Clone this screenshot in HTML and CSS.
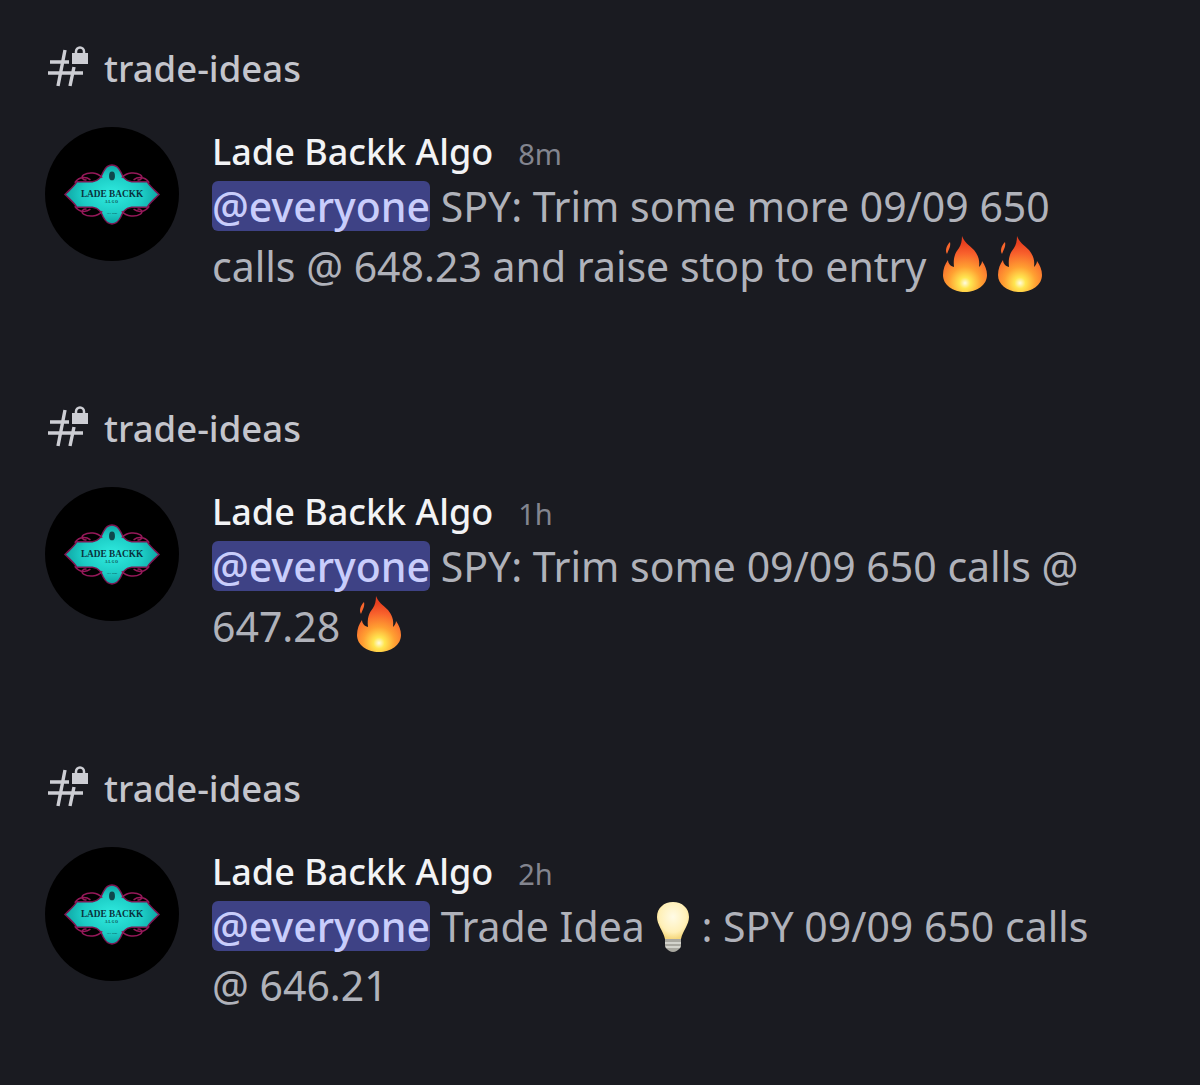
FILE: index.html
```html
<!DOCTYPE html>
<html>
  <head>
    <title>trade-ideas</title>
    <link rel="stylesheet" href="styles.css">
  </head>
  <body>
    <svg class="defs" width="0" height="0">
      <defs>
        <radialGradient id="fire" gradientUnits="userSpaceOnUse" cx="22" cy="47" r="40">
          <stop offset="0" stop-color="#fffbe0"/>
          <stop offset="0.14" stop-color="#ffe650"/>
          <stop offset="0.4" stop-color="#ffa032"/>
          <stop offset="0.75" stop-color="#f8602c"/>
          <stop offset="1" stop-color="#e8401f"/>
        </radialGradient>
        <radialGradient id="bulb" cx="0.5" cy="0.4" r="0.6">
          <stop offset="0" stop-color="#fffbe6"/>
          <stop offset="0.7" stop-color="#fff0b8"/>
          <stop offset="1" stop-color="#f5d77c"/>
        </radialGradient>
        <radialGradient id="teal" cx="0.5" cy="0.5" r="0.55">
          <stop offset="0" stop-color="#30ece0"/>
          <stop offset="0.6" stop-color="#1ccbc4"/>
          <stop offset="1" stop-color="#0a9a9a"/>
        </radialGradient>
        <symbol id="flame" viewBox="0 0 44 56">
          <path fill="url(#fire)" d="M19 0C21 6 26 9 31 14C35 19 37 24 36 31C38 29 39 27 39 25C42 29 44 34 44 39C44 49 34 56 22 56C10 56 0 49 0 39C0 33 2 28 5 24C5 27 7 30 11 31C10 22 12 17 16 12C18 9 19 5 19 0Z"/>
          <path fill="#f9662c" d="M7 6C8 10 6 13 4 18C2 15 3 10 7 6Z"/>
        </symbol>
        <symbol id="channel" viewBox="0 0 46 44">
          <path class="hash" d="M3 16H22M1 27H36M18 4L11 40M27 21L23 40"/>
          <path class="lock-body" d="M25 7H41V18H25Z"/>
          <path class="lock-shackle" d="M29 8V5.500A4 4 0 0 1 37 5.500V8"/>
        </symbol>
        <path id="scroll" class="logo-scroll" d="M60 15C65 9 74 9 79 12C82 14 80 18 76 17M72 17C76 14 83 13 88 20"/>
        <symbol id="logo" viewBox="0 0 100 64">
          <path class="logo-body" d="M50 2C54 2 57 5 59 9C61 14 63 18 70 19L86 19C88 23 93 27 98 32C93 37 88 41 86 45L70 45C63 46 61 50 59 55C57 59 54 62 50 62C46 62 43 59 41 55C39 50 37 46 30 45L14 45C12 41 7 37 2 32C7 27 12 23 14 19L30 19C37 18 39 14 41 9C43 5 46 2 50 2Z"/>
          <use href="#scroll"/>
          <use href="#scroll" transform="matrix(-1 0 0 1 100 0)"/>
          <use href="#scroll" transform="matrix(1 0 0 -1 0 64)"/>
          <use href="#scroll" transform="matrix(-1 0 0 -1 100 64)"/>
          <ellipse class="logo-crest" cx="50" cy="13" rx="3" ry="4.500"/>
          <text class="logo-title" x="50" y="35" text-anchor="middle">LADE BACKK</text>
          <text class="logo-sub" x="50" y="41" text-anchor="middle">ALGO</text>
          <text class="logo-est" x="50" y="52" text-anchor="middle">EST. 2020</text>
        </symbol>
      </defs>
    </svg>

    <!-- first notification -->
    <section class="notification">
      <div class="channel-row">
        <svg class="channel-icon"><use href="#channel"/></svg>
        <span class="channel-name">trade-ideas</span>
      </div>
      <div class="message">
        <div class="avatar"><svg class="logo"><use href="#logo"/></svg></div>
        <div class="message-body">
          <div class="author-row">
            <span class="author">Lade Backk Algo</span>
            <span class="time">8m</span>
          </div>
          <p class="text"><span class="mention">@everyone</span> SPY: Trim some more 09/09 650 calls @ 648.23 and raise stop to entry <svg class="emoji"><use href="#flame"/></svg> <svg class="emoji next"><use href="#flame"/></svg></p>
        </div>
      </div>
    </section>

    <!-- second notification -->
    <section class="notification">
      <div class="channel-row">
        <svg class="channel-icon"><use href="#channel"/></svg>
        <span class="channel-name">trade-ideas</span>
      </div>
      <div class="message">
        <div class="avatar"><svg class="logo"><use href="#logo"/></svg></div>
        <div class="message-body">
          <div class="author-row">
            <span class="author">Lade Backk Algo</span>
            <span class="time">1h</span>
          </div>
          <p class="text"><span class="mention">@everyone</span> SPY: Trim some 09/09 650 calls @ 647.28 <svg class="emoji"><use href="#flame"/></svg></p>
        </div>
      </div>
    </section>

    <!-- third notification -->
    <section class="notification">
      <div class="channel-row">
        <svg class="channel-icon"><use href="#channel"/></svg>
        <span class="channel-name">trade-ideas</span>
      </div>
      <div class="message">
        <div class="avatar"><svg class="logo"><use href="#logo"/></svg></div>
        <div class="message-body">
          <div class="author-row">
            <span class="author">Lade Backk Algo</span>
            <span class="time">2h</span>
          </div>
          <p class="text"><span class="mention">@everyone</span> Trade Idea <svg class="emoji bulb" viewBox="0 0 32 50"><path fill="url(#bulb)" d="M16 0C25 0 32 6 32 15C32 23 26 28 24 37H8C6 28 0 23 0 15C0 6 7 0 16 0Z"/><path fill="#a9a8a0" d="M8 37H24V45Q20 50 16 50Q12 50 8 45Z"/><path class="bulb-thread" d="M8 41H24M9 45H23"/></svg>: SPY 09/09 650 calls @ 646.21</p>
        </div>
      </div>
    </section>
  </body>
</html>
```

FILE: styles.css
```css
body {
  margin: 0;
  padding: 0;
  background-color: rgb(26, 27, 33);
  font-family: "Noto Sans", "Open Sans", sans-serif;
}
.defs {
  position: absolute;
}
.notification {
  height: 360px;
  padding-top: 46px;
  padding-left: 45px;
  box-sizing: border-box;
}
.channel-row {
  display: flex;
  align-items: center;
  height: 44px;
}
.channel-icon {
  width: 46px;
  height: 44px;
  margin-left: 2px;
  margin-right: 11px;
}
.hash {
  fill: none;
  stroke: rgb(205, 206, 212);
  stroke-width: 3.4;
}
.lock-body {
  fill: rgb(205, 206, 212);
}
.lock-shackle {
  fill: none;
  stroke: rgb(205, 206, 212);
  stroke-width: 2.5;
}
.channel-name {
  font-size: 36.500px;
  font-weight: 500;
  color: rgb(196, 197, 204);
}
.message {
  display: flex;
  margin-top: 35px;
}
.avatar {
  width: 134px;
  height: 134px;
  flex-shrink: 0;
  margin-top: 2px;
  border-radius: 50%;
  background-color: rgb(0, 0, 0);
  display: flex;
  align-items: center;
  justify-content: center;
}
.logo {
  width: 98px;
  height: 63px;
}
.logo-body {
  fill: url(#teal);
  stroke: rgb(125, 20, 80);
  stroke-width: 1.5;
}
.logo-scroll {
  fill: none;
  stroke: rgb(150, 25, 90);
  stroke-width: 1.5;
}
.logo-crest {
  fill: rgb(15, 70, 75);
}
.logo-title {
  font-family: "Liberation Serif", serif;
  font-size: 9.500px;
  font-weight: bold;
  fill: rgb(10, 50, 60);
}
.logo-sub {
  font-family: "Liberation Serif", serif;
  font-size: 3.500px;
  font-weight: bold;
  letter-spacing: 1px;
  fill: rgb(10, 50, 60);
}
.logo-est {
  font-family: "Liberation Serif", serif;
  font-size: 2.500px;
  fill: rgb(10, 50, 60);
}
.message-body {
  margin-left: 33px;
  width: 900px;
  padding-top: 2px;
}
.author-row {
  display: flex;
  align-items: baseline;
  height: 50px;
}
.author {
  font-size: 36px;
  font-weight: 500;
  color: rgb(242, 243, 245);
}
.time {
  margin-left: 25px;
  font-size: 29px;
  color: rgb(131, 133, 143);
}
.text {
  margin: 0;
  font-size: 41px;
  line-height: 59px;
  color: rgb(176, 178, 186);
}
.mention {
  display: inline-block;
  line-height: 50px;
  border-radius: 6px;
  background-color: rgb(62, 66, 133);
  color: rgb(201, 205, 251);
  font-weight: 500;
}
.emoji {
  width: 44px;
  height: 56px;
  margin-left: 6px;
  vertical-align: -10px;
}
.next {
  margin-left: 0;
}
.bulb {
  width: 32px;
  height: 50px;
  margin: 0 12px 0 2px;
  vertical-align: -10px;
}
.bulb-thread {
  fill: none;
  stroke: rgb(225, 225, 218);
  stroke-width: 1.5;
}
```
